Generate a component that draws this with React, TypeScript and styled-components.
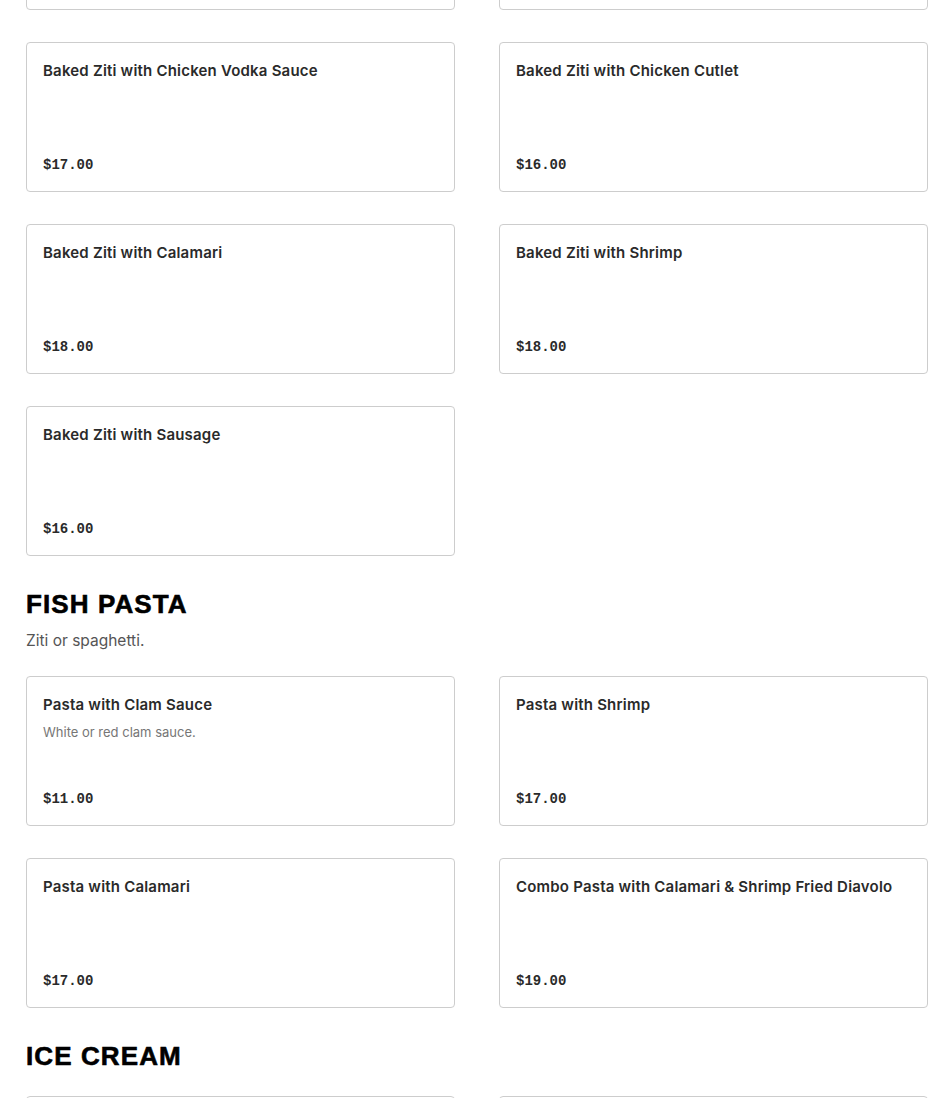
import React from "react";
import styled, { createGlobalStyle } from "styled-components";

const Global = createGlobalStyle`
  html, body { margin: 0; padding: 0; background: #fff; }
  body { font-family: "Inter", "Liberation Sans", sans-serif; color: #2a2a2a; }
  * { box-sizing: border-box; }
`;

const Page = styled.div`
  width: 950px;
  padding: 0 22px 0 26px;
  margin-top: -140px;
  display: flex;
  flex-direction: column;
`;

const Section = styled.section`
  display: flex;
  flex-direction: column;
  & + & { margin-top: 32px; }
`;

const Heading = styled.h2`
  margin: 0;
  font-family: "Liberation Sans", "Arial", sans-serif;
  font-weight: 900;
  font-size: 26px;
  line-height: 32px;
  letter-spacing: 1.1px;
  -webkit-text-stroke: 0.6px #000;
  color: #000;
  text-transform: uppercase;
`;

const SectionDesc = styled.p`
  margin: 8px 0 0;
  font-family: "Inter", "Liberation Sans", sans-serif;
  font-size: 15.5px;
  line-height: 24px;
  color: #555;
  transform: translateY(1px);
`;

const Grid = styled.div<{ $offset: number }>`
  display: grid;
  grid-template-columns: 429px 429px;
  column-gap: 44px;
  row-gap: 32px;
  margin-top: ${(p) => p.$offset}px;
`;

const Card = styled.div`
  height: 150px;
  border: 1px solid #cdcdcd;
  border-radius: 4px;
  padding: 16px;
  display: flex;
  flex-direction: column;
  background: #fff;
`;

const Title = styled.div`
  font-family: "Inter", "Liberation Sans", sans-serif;
  font-weight: 600;
  font-size: 15px;
  line-height: 24px;
  letter-spacing: 0.2px;
  color: #2a2a2a;
`;

const Desc = styled.div`
  margin-top: 5px;
  font-family: "Inter", "Liberation Sans", sans-serif;
  font-size: 13px;
  line-height: 20px;
  color: #767676;
`;

const Price = styled.div`
  margin-top: auto;
  font-family: "Liberation Mono", "DejaVu Sans Mono", monospace;
  font-weight: 700;
  font-size: 14px;
  line-height: 20px;
  color: #2a2a2a;
`;

type Item = { name: string; price: string; desc?: string };

const sections: { title?: string; desc?: string; items: Item[] }[] = [
  {
    items: [
      { name: "Baked Ziti", price: "$13.00" },
      { name: "Baked Ziti with Meatballs", price: "$16.00" },
      { name: "Baked Ziti with Chicken Vodka Sauce", price: "$17.00" },
      { name: "Baked Ziti with Chicken Cutlet", price: "$16.00" },
      { name: "Baked Ziti with Calamari", price: "$18.00" },
      { name: "Baked Ziti with Shrimp", price: "$18.00" },
      { name: "Baked Ziti with Sausage", price: "$16.00" },
    ],
  },
  {
    title: "Fish Pasta",
    desc: "Ziti or spaghetti.",
    items: [
      { name: "Pasta with Clam Sauce", desc: "White or red clam sauce.", price: "$11.00" },
      { name: "Pasta with Shrimp", price: "$17.00" },
      { name: "Pasta with Calamari", price: "$17.00" },
      { name: "Combo Pasta with Calamari & Shrimp Fried Diavolo", price: "$19.00" },
    ],
  },
  {
    title: "Ice Cream",
    items: [
      { name: "Spumoni", price: "$5.00" },
      { name: "Tartufo", price: "$6.00" },
    ],
  },
];

export default function App() {
  return (
    <>
      <Global />
      <Page>
        {sections.map((s, i) => (
          <Section key={i}>
            {s.title && <Heading>{s.title}</Heading>}
            {s.desc && <SectionDesc>{s.desc}</SectionDesc>}
            <Grid $offset={s.title ? 24 : 0}>
              {s.items.map((it) => (
                <Card key={it.name}>
                  <Title>{it.name}</Title>
                  {it.desc && <Desc>{it.desc}</Desc>}
                  <Price>{it.price}</Price>
                </Card>
              ))}
            </Grid>
          </Section>
        ))}
      </Page>
    </>
  );
}
